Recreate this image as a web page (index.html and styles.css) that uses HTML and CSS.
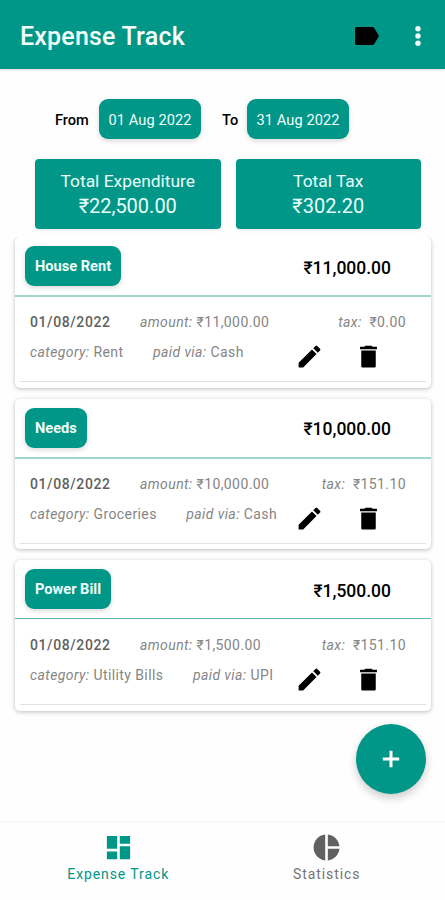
FILE: index.html
```html
<!DOCTYPE html>
<html lang="en">
<head>
	<meta charset="UTF-8">
	<title>Expense Track</title>
	<link rel="stylesheet" href="styles.css">
</head>
<body>
	<header class="topbar">
		<h1>Expense Track</h1>
		<svg class="label" viewBox="0 0 24 18"><path d="M2 0h15.500q1 0 1.600 .8L24 9l-4.900 8.200q-.6 .8-1.600 .8H2q-2 0-2-2V2q0-2 2-2z"/></svg>
		<svg class="more" viewBox="0 0 6 20"><circle cx="3" cy="2.700" r="2.700"/><circle cx="3" cy="10" r="2.700"/><circle cx="3" cy="17.300" r="2.700"/></svg>
	</header>

	<div class="dates">
		<span class="from">From</span>
		<button class="chip date">01 Aug 2022</button>
		<span class="to">To</span>
		<button class="chip date">31 Aug 2022</button>
	</div>

	<div class="totals">
		<div class="total"><p>Total Expenditure</p><p class="sum">₹22,500.00</p></div>
		<div class="total"><p>Total Tax</p><p class="sum">₹302.20</p></div>
	</div>

	<!-- expense list -->
	<main class="list">
		<section class="card">
			<div class="head"><span class="chip">House Rent</span><strong>₹11,000.00</strong></div>
			<div class="info">
				<div class="row">
					<b>01/08/2022</b>
					<span><i>amount:</i> ₹11,000.00</span>
					<span class="tax"><i>tax:</i>&nbsp; ₹0.00</span>
				</div>
				<div class="row2">
					<span class="cat"><i>category:</i> Rent</span>
					<span class="paid"><i>paid via:</i> Cash</span>
					<span class="tools">
						<svg viewBox="0 0 24 24"><path d="M3 17.250V21h3.750L17.810 9.940l-3.750-3.750L3 17.250zM20.710 7.040a1 1 0 0 0 0-1.410l-2.340-2.340a1 1 0 0 0-1.410 0l-1.830 1.830 3.750 3.750 1.830-1.830z"/></svg>
						<svg viewBox="0 0 24 24"><path d="M6 20q0 1 1 1h10q1 0 1-1V7H6v13zM19 4h-3.500l-1-1h-5l-1 1H5v2h14V4z"/></svg>
					</span>
				</div>
			</div>
		</section>

		<section class="card">
			<div class="head"><span class="chip">Needs</span><strong>₹10,000.00</strong></div>
			<div class="info">
				<div class="row">
					<b>01/08/2022</b>
					<span><i>amount:</i> ₹10,000.00</span>
					<span class="tax"><i>tax:</i>&nbsp; ₹151.10</span>
				</div>
				<div class="row2">
					<span class="cat"><i>category:</i> Groceries</span>
					<span class="paid"><i>paid via:</i> Cash</span>
					<span class="tools">
						<svg viewBox="0 0 24 24"><path d="M3 17.250V21h3.750L17.810 9.940l-3.750-3.750L3 17.250zM20.710 7.040a1 1 0 0 0 0-1.410l-2.340-2.340a1 1 0 0 0-1.410 0l-1.830 1.830 3.750 3.750 1.830-1.830z"/></svg>
						<svg viewBox="0 0 24 24"><path d="M6 20q0 1 1 1h10q1 0 1-1V7H6v13zM19 4h-3.500l-1-1h-5l-1 1H5v2h14V4z"/></svg>
					</span>
				</div>
			</div>
		</section>

		<section class="card">
			<div class="head last"><span class="chip">Power Bill</span><strong>₹1,500.00</strong></div>
			<div class="info">
				<div class="row">
					<b>01/08/2022</b>
					<span><i>amount:</i> ₹1,500.00</span>
					<span class="tax"><i>tax:</i>&nbsp; ₹151.10</span>
				</div>
				<div class="row2">
					<span class="cat"><i>category:</i> Utility Bills</span>
					<span class="paid"><i>paid via:</i> UPI</span>
					<span class="tools">
						<svg viewBox="0 0 24 24"><path d="M3 17.250V21h3.750L17.810 9.940l-3.750-3.750L3 17.250zM20.710 7.040a1 1 0 0 0 0-1.410l-2.340-2.340a1 1 0 0 0-1.410 0l-1.830 1.830 3.750 3.750 1.830-1.830z"/></svg>
						<svg viewBox="0 0 24 24"><path d="M6 20q0 1 1 1h10q1 0 1-1V7H6v13zM19 4h-3.500l-1-1h-5l-1 1H5v2h14V4z"/></svg>
					</span>
				</div>
			</div>
		</section>
	</main>

	<button class="add" aria-label="Add">
		<svg viewBox="0 0 18 18"><path d="M9 .8v16.400M.8 9h16.400"/></svg>
	</button>

	<nav class="tabs">
		<a class="tab on">
			<svg viewBox="0 0 24 24"><path d="M3 13h8V3H3v10zm0 8h8v-6H3v6zm10 0h8V11h-8v10zm0-18v6h8V3h-8z"/></svg>
			<span>Expense Track</span>
		</a>
		<a class="tab">
			<svg viewBox="0 0 24 24"><path d="M11 2v20c-5.070-.5-9-4.790-9-10s3.930-9.500 9-10zm2.030 0v8.990H22c-.47-4.740-4.240-8.520-8.970-8.990zm0 11.010V22c4.740-.47 8.500-4.250 8.970-8.990h-8.970z"/></svg>
			<span>Statistics</span>
		</a>
	</nav>
</body>
</html>
```
FILE: styles.css
```css
*{margin: 0;padding: 0;box-sizing: border-box;}
body{
	height: 900px;
	display: flex;
	flex-direction: column;
	overflow: hidden;
	background: #fefefe;
	font-family: Roboto, "Liberation Sans", sans-serif;
	color: #000;
}
svg{display: block;}
button{border: 0;font-family: inherit;}

.topbar{flex: none;height: 69px;background: #009688;display: flex;align-items: center;padding: 2px 24px 0 20px;box-shadow: 0 1px 2px rgba(0,0,0,.15);}
.topbar h1{flex: 1;padding-top: 1px;font-size: 25px;font-weight: 500;color: #f4fffd;letter-spacing: .2px;}
.label{width: 24px;height: 18px;}
.more{width: 6px;height: 20px;margin-left: 36px;fill: #f4fffd;}

.chip{height: 40px;padding: 0 10px;border-radius: 9px;background: #009688;color: #f0fffc;font-size: 14.6px;font-weight: 700;display: flex;align-items: center;box-shadow: 0 2px 5px rgba(0,0,0,.15);}
.dates{flex: none;display: flex;align-items: center;padding: 30px 0 0 55px;font-size: 14.6px;font-weight: 500;}
.from{width: 44px;padding-top: 2px;}
.to{width: 25px;margin-left: 21px;padding-top: 2px;}
.date{width: 102px;justify-content: center;padding: 2px 0 0;font-weight: 400;letter-spacing: .1px;white-space: nowrap;}

.totals{flex: none;display: flex;gap: 15px;padding: 20px 24px 0 35px;}
.total{flex: 1;height: 70px;padding-top: 10px;background: #009688;border-radius: 4px;text-align: center;color: #e8fffa;font-size: 17.4px;line-height: 25px;box-shadow: 0 1px 3px rgba(0,0,0,.1);}
.sum{font-size: 20px;}

.list{flex: none;height: 485px;margin-top: 8px;padding: 0 14px 0 15px;display: flex;flex-direction: column;gap: 11.5px;overflow: hidden;}
.card{flex: none;height: 150.5px;background: #fff;border-radius: 5px;box-shadow: 0 1px 4px rgba(0,0,0,.26);}
.card + .card{margin-top: -.5px;}
.head{height: 60px;padding: 0 40px 0 10px;display: flex;align-items: center;justify-content: space-between;border-bottom: 2px solid #a3d5cf;}
.head.last{border-bottom: 1px solid #5cb3a8;height: 59px;margin-bottom: 1px;}
.head strong{padding-top: 3px;font-size: 17.5px;font-weight: 500;}
.info{height: 85px;margin: 0 5px;padding: 15px 20px 0 10px;border-bottom: 1px solid #e2e2e2;font-size: 14px;line-height: 20px;color: #858585;letter-spacing: .4px;}
.info b{font-weight: 500;color: #606060;letter-spacing: .6px;}
.row{display: grid;grid-template-columns: 110px 1fr auto;}
.row2{display: flex;height: 30px;margin-top: 10px;}
.paid{margin-left: 29.5px;}
.tools{display: flex;gap: 30px;margin: 0 23px 0 auto;}
.tools svg{width: 29px;height: 29px;}

.add{position: absolute;left: 356px;top: 724px;width: 70px;height: 70px;border-radius: 50%;background: #009688;display: flex;align-items: center;justify-content: center;box-shadow: 0 4px 8px rgba(0,0,0,.2);}
.add svg{width: 18px;height: 18px;stroke: #fff;stroke-width: 3;}

.tabs{flex: none;height: 79px;margin-top: auto;border-top: 1px solid #f5f5f5;display: flex;padding: 10px 14px 0;}
.tab{flex: 1;display: flex;flex-direction: column;align-items: center;font-size: 14px;line-height: 20px;letter-spacing: .9px;color: #757575;}
.tab svg{width: 31px;height: 31px;fill: #616161;}
.tab span{margin-top: 1px;}
.tab.on{color: #009688;}
.tab.on svg{fill: #009688;}
```
